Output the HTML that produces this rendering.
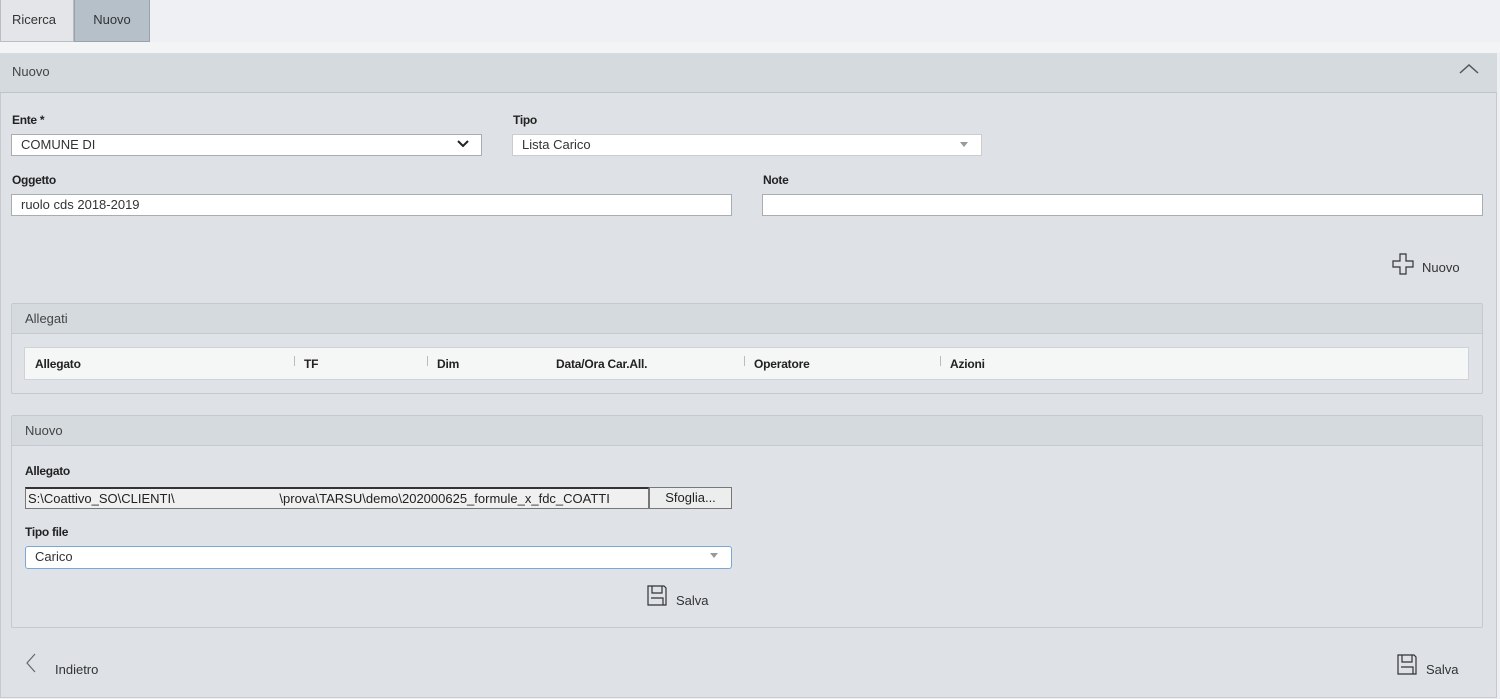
<!DOCTYPE html>
<html><head><meta charset="utf-8"><style>
*{box-sizing:border-box;margin:0;padding:0}
body{width:1500px;height:699px;background:#eef0f3;font-family:"Liberation Sans",sans-serif;font-size:13px;color:#333;position:relative;overflow:hidden}
.a{position:absolute}
.tab{top:0;height:42px;line-height:40px;font-size:13px;text-align:center;border:1px solid #b9bec4;border-top:none}
.lbl{font-weight:bold;font-size:12px;color:#222;letter-spacing:-0.3px}
.inp{background:#fff;border:1px solid #a9adb2;height:22px;line-height:20px;padding-left:9px;font-size:13px;color:#333}
.sub{background:#dfe3e7;border:1px solid #c6cacf;border-radius:2px}
.subh{height:30px;line-height:30px;padding-left:13px;background:#d5dade;border-bottom:1px solid #c6cacf;color:#444;font-size:13px}
.th{font-weight:bold;font-size:12px;color:#222;top:9px;letter-spacing:-0.2px}
.sep{top:8px;width:1px;height:10px;background:#bbb}
</style></head><body>
<div class="a tab" style="left:0;width:74px;background:#e3e5e8;color:#333;padding-right:6px">Ricerca</div>
<div class="a tab" style="left:74px;width:76px;background:#b6c0c9;border:1px solid #9aa3ab;border-top:none;color:#333">Nuovo</div>
<div class="a" style="left:0;top:42px;width:1500px;height:11px;background:#f3f4f6"></div>
<div class="a" style="left:0;top:53px;width:1497px;height:645px;background:#dee2e6;border:1px solid #c6cacf"></div>
<div class="a" style="left:0;top:53px;width:1497px;height:40px;background:#d5dade;border-bottom:1px solid #bfc4c9"></div>
<div class="a" style="left:12px;top:64px;color:#444">Nuovo</div>
<svg class="a" style="left:1459px;top:63px" width="20" height="12"><path d="M1 10 L10 2 L19 10" fill="none" stroke="#555" stroke-width="1.5"/></svg>

<div class="a lbl" style="left:12px;top:113px">Ente *</div>
<div class="a inp" style="left:11px;top:134px;width:471px">COMUNE DI</div>
<svg class="a" style="left:457px;top:140px" width="12" height="8"><path d="M1 1 L6 6 L11 1" fill="none" stroke="#222" stroke-width="2"/></svg>
<div class="a lbl" style="left:513px;top:113px">Tipo</div>
<div class="a inp" style="left:512px;top:134px;width:470px;border-color:#ccc">Lista Carico</div>
<div class="a" style="left:960px;top:142px;border:4px solid transparent;border-top:5px solid #999"></div>

<div class="a lbl" style="left:12px;top:173px">Oggetto</div>
<div class="a inp" style="left:11px;top:194px;width:721px">ruolo cds 2018-2019</div>
<div class="a lbl" style="left:763px;top:173px">Note</div>
<div class="a inp" style="left:762px;top:194px;width:721px"></div>

<svg class="a" style="left:1392px;top:253px" width="22" height="22"><path d="M8 1 H14 V8 H21 V14 H14 V21 H8 V14 H1 V8 H8 Z" fill="none" stroke="#333" stroke-width="1.2"/></svg>
<div class="a" style="left:1422px;top:260px;font-size:13px">Nuovo</div>

<div class="a sub" style="left:11px;top:303px;width:1472px;height:91px"><div class="subh">Allegati</div></div>
<div class="a" style="left:24px;top:347px;width:1445px;height:33px;background:#f5f6f6;border:1px solid #cfd3d7">
<div class="a th" style="left:10px">Allegato</div><div class="a sep" style="left:269px"></div>
<div class="a th" style="left:279px">TF</div><div class="a sep" style="left:402px"></div>
<div class="a th" style="left:412px">Dim</div>
<div class="a th" style="left:531px">Data/Ora Car.All.</div><div class="a sep" style="left:719px"></div>
<div class="a th" style="left:729px">Operatore</div><div class="a sep" style="left:915px"></div>
<div class="a th" style="left:925px">Azioni</div>
</div>

<div class="a sub" style="left:11px;top:415px;width:1472px;height:213px"><div class="subh">Nuovo</div></div>
<div class="a lbl" style="left:25px;top:464px">Allegato</div>
<div class="a" style="left:25px;top:487px;width:624px;height:22px;background:#f0f0f0;border:1px solid #777;border-top:2px solid #333;line-height:19px;padding-left:2px;font-size:13px;color:#222;white-space:pre">S:\Coattivo_SO\CLIENTI\                             \prova\TARSU\demo\202000625_formule_x_fdc_COATTI</div>
<div class="a" style="left:649px;top:487px;width:83px;height:22px;background:#eceded;border:1px solid #777;line-height:20px;text-align:center;font-size:13px;color:#222">Sfoglia...</div>
<div class="a lbl" style="left:25px;top:525px">Tipo file</div>
<div class="a inp" style="left:25px;top:546px;width:707px;height:23px;border:1px solid #7aa7d6;border-radius:3px">Carico</div>
<div class="a" style="left:710px;top:553px;border:4px solid transparent;border-top:5px solid #999"></div>
<svg class="a" style="left:647px;top:585px" width="20" height="21"><path d="M1 1 H17 L19 3 V20 H1 Z M5 1 V8 H15 V1 M4 13 H16 V20" fill="none" stroke="#333" stroke-width="1.2"/></svg>
<div class="a" style="left:676px;top:593px">Salva</div>

<svg class="a" style="left:25px;top:653px" width="12" height="20"><path d="M10 1 L2 10 L10 19" fill="none" stroke="#666" stroke-width="1.2"/></svg>
<div class="a" style="left:55px;top:662px">Indietro</div>
<svg class="a" style="left:1397px;top:654px" width="20" height="21"><path d="M1 1 H17 L19 3 V20 H1 Z M5 1 V8 H15 V1 M4 13 H16 V20" fill="none" stroke="#333" stroke-width="1.2"/></svg>
<div class="a" style="left:1426px;top:662px">Salva</div>
</body></html>
